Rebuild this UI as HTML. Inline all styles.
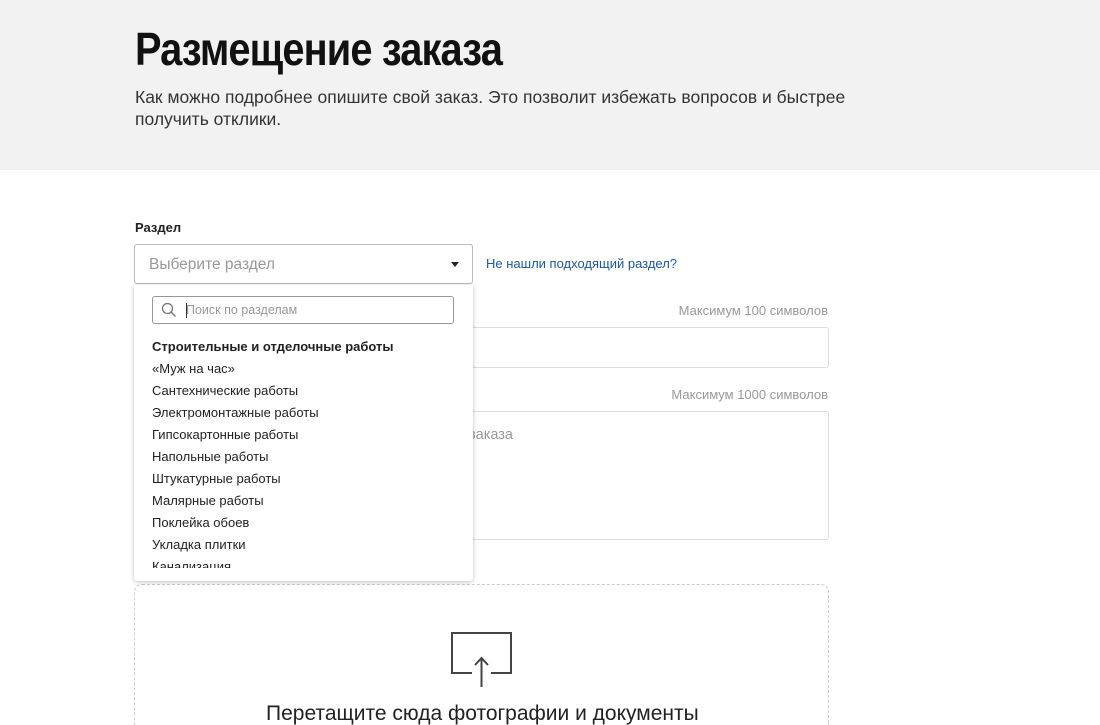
<!DOCTYPE html>
<html><head><meta charset="utf-8"><style>
*{box-sizing:border-box;margin:0;padding:0}
html,body{width:1100px;height:725px;overflow:hidden}
body{background:#fff;font-family:"Liberation Sans","DejaVu Sans",sans-serif;color:#222;position:relative}
.hdr{position:absolute;left:0;top:0;width:1100px;height:170px;background:#f2f2f2}
h1{position:absolute;left:135px;top:22px;font-size:46px;font-weight:bold;letter-spacing:-1px;transform:scaleX(.865);transform-origin:left;white-space:nowrap;color:#111}
.sub{position:absolute;left:135px;top:86px;width:740px;font-size:17.5px;line-height:22px;color:#333}
.lbl{position:absolute;left:135px;top:220px;font-size:13px;font-weight:bold}
.sel{position:absolute;left:134px;top:244px;width:339px;height:40px;border:1px solid #bbb;border-radius:3px;font-size:15.5px;color:#999;padding:11px 14px}
.sel:after{content:"";position:absolute;right:13px;top:17px;border:4.5px solid transparent;border-top:5px solid #222}
.link{position:absolute;left:486px;top:256px;font-size:13px;color:#1a57a8}
.max{position:absolute;right:272px;font-size:13px;color:#999}
.inp{position:absolute;left:134px;width:695px;border:1px solid #ddd;border-radius:3px}
.ph{position:absolute;left:469px;top:427px;font-size:14.5px;color:#999}
.dd{position:absolute;left:134px;top:285px;width:339px;height:296px;background:#fff;box-shadow:0 1px 5px rgba(0,0,0,.25);border-radius:0 0 3px 3px;overflow:hidden}
.srch{position:absolute;left:18px;top:11px;width:302px;height:28px;border:1px solid #999;border-radius:3px;font-size:12.5px;color:#999;padding:6px 0 0 33px}
.srch:before{content:"";position:absolute;left:33px;top:6px;width:1px;height:15px;background:#333}
.list{position:absolute;left:18px;top:51px;height:232px;overflow:hidden;font-size:13px;line-height:22px;color:#222}
.list b{display:block}
.drop{position:absolute;left:134px;top:584px;width:695px;height:141px;border:1.5px dashed #ccc;border-bottom:none;border-radius:8px 8px 0 0}
.up{position:absolute;left:266px;top:702px;font-size:21px;line-height:23px;color:#222;white-space:nowrap}
</style></head><body>
<div class="hdr"></div>
<h1>Размещение заказа</h1>
<div class="sub">Как можно подробнее опишите свой заказ. Это позволит избежать вопросов и быстрее получить отклики.</div>
<div class="lbl">Раздел</div>
<div class="sel">Выберите раздел</div>
<div class="link">Не нашли подходящий раздел?</div>
<div class="max" style="top:303px">Максимум 100 символов</div>
<div class="inp" style="top:327px;height:41px"></div>
<div class="max" style="top:387px">Максимум 1000 символов</div>
<div class="inp" style="top:411px;height:129px"></div>
<div class="ph">заказа</div>
<div class="drop"></div>
<svg style="position:absolute;left:450px;top:631px" width="64" height="58" viewBox="0 0 64 58"><path d="M22 42H2V2H61V42H41" fill="none" stroke="#444" stroke-width="2"/><path d="M31.5 56V27M25 34l6.5-7 6.5 7" fill="none" stroke="#444" stroke-width="2"/></svg>
<div class="up">Перетащите сюда фотографии и документы</div>
<div class="dd">
<div class="srch">Поиск по разделам</div>
<svg style="position:absolute;left:27px;top:17px" width="16" height="16" viewBox="0 0 16 16"><circle cx="6.5" cy="6.5" r="5" fill="none" stroke="#777" stroke-width="1.3"/><path d="M10 10l4.5 4.5" stroke="#777" stroke-width="1.3"/></svg>
<div class="list"><b>Строительные и отделочные работы</b>«Муж на час»<br>Сантехнические работы<br>Электромонтажные работы<br>Гипсокартонные работы<br>Напольные работы<br>Штукатурные работы<br>Малярные работы<br>Поклейка обоев<br>Укладка плитки<br>Канализация</div>
</div>
</body></html>
